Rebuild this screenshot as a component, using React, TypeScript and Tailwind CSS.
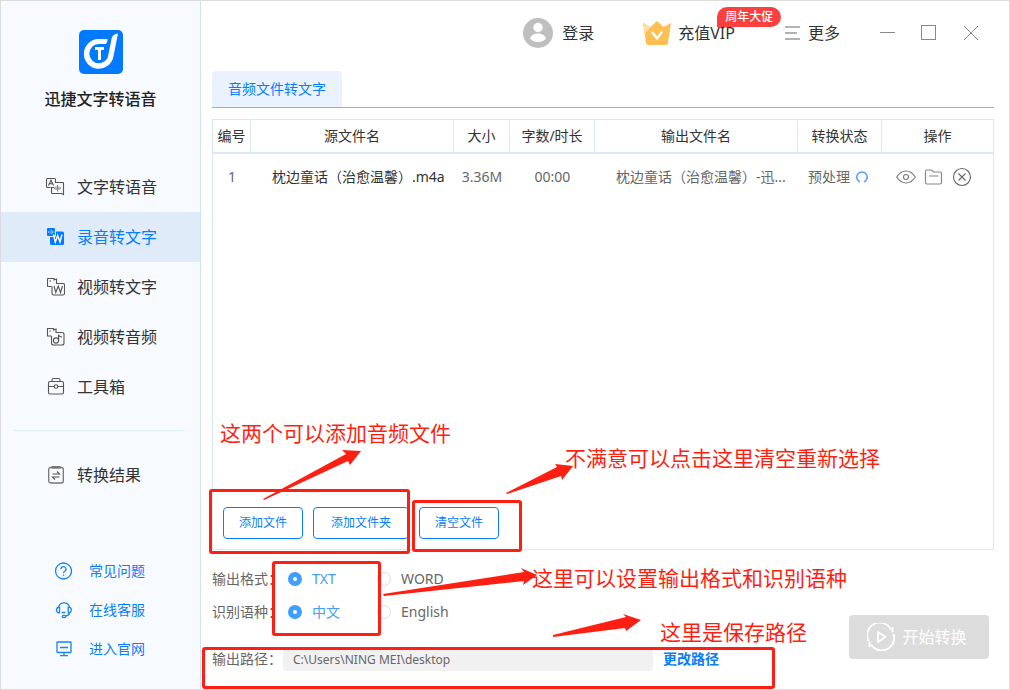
import React, { useState } from 'react';

const helpLinks = [
    { label: '常见问题', icon: <HelpIcon /> },
    { label: '在线客服', icon: <HeadsetIcon /> },
    { label: '进入官网', icon: <MonitorIcon /> },
];

const navItems = [
    { label: '文字转语音', icon: <TextToVoiceIcon /> },
    { label: '录音转文字', icon: <VoiceToTextIcon /> },
    { label: '视频转文字', icon: <VideoToTextIcon /> },
    { label: '视频转音频', icon: <VideoToAudioIcon /> },
    { label: '工具箱', icon: <ToolboxIcon /> },
];

const columns = [
    { title: '编号', width: 'w-[38px]' },
    { title: '源文件名', width: 'w-auto' },
    { title: '大小', width: 'w-14' },
    { title: '字数/时长', width: 'w-[85px]' },
    { title: '输出文件名', width: 'w-auto' },
    { title: '转换状态', width: 'w-[84px]' },
    { title: '操作', width: 'w-[111px]' },
];

const files = [
    { id: 1, source: '枕边童话（治愈温馨）.m4a', size: '3.36M', length: '00:00', output: '枕边童话（治愈温馨）-迅...', status: '预处理' },
];

const notes = [
    { text: '这两个可以添加音频文件', place: 'left-[220px] top-[419px]' },
    { text: '不满意可以点击这里清空重新选择', place: 'left-[565px] top-[444px]' },
    { text: '这里可以设置输出格式和识别语种', place: 'left-[532px] top-[564px]' },
    { text: '这里是保存路径', place: 'left-[660px] top-[618px]' },
];

const frames = [
    'left-[209px] top-[489px] w-[201px] h-[65px]',
    'left-[412px] top-[500px] w-[110px] h-[52px]',
    'left-[272px] top-[561px] w-[109px] h-[75px]',
    'left-[202px] top-[647px] w-[573px] h-[42px]',
];

const arrows = [
    '263,499 346,454 342,450 361,451 350,465 348,461 264,500',
    '506,493 557,467 555,464 573,466 562,480 561,476 507,494',
    '383,594 524,572 521,568 537,575 523,585 524,581 384,596',
    '553,635 626,617 623,614 641,620 626,631 625,628 553,637',
];

function Logo() {
    return (
        <svg width="44" height="44" viewBox="0 0 44 44">
            <rect width="44" height="44" rx="5" fill="#027aff" />
            <path d="M28.500 9H19.500A14.900 14.900 0 1 0 34.500 26L39 3.500C34.500 4 33 6 32.400 9.500L29.500 24A9.600 9.600 0 1 1 19.500 14H26.500Q28.500 13 28.500 9Z" fill="#fff" />
            <path d="M16 18.500H25M20.500 18.500V30" stroke="#fff" strokeWidth="3" fill="none" />
        </svg>
    );
}

function TextToVoiceIcon() {
    return (
        <svg width="20" height="20" viewBox="0 0 20 20" fill="none" stroke="#555" strokeWidth="1.100">
            <path d="M5.500 10.500H2.500Q1.500 10.500 1.500 9.500V2.500Q1.500 1.500 2.500 1.500H9.500Q10.500 1.500 10.500 2.500V5.500H18Q18.500 5.500 18.500 6V17.500L16.500 16.500H7.500Q6.500 16.500 6.500 15.500V10.500H9" />
            <path d="M3.500 8.500L6 3.300L8.500 8.500M4.500 6.800H7.500" />
            <path d="M9.500 10.500V12M11 9.500V13M12.500 8V14.500M14 9.500V13M15.500 10.500V12" stroke="#888" />
        </svg>
    );
}

function VoiceToTextIcon() {
    return (
        <svg width="20" height="20" viewBox="0 0 20 20" fill="none">
            <rect x="2" y="1" width="8" height="8" rx="1" fill="#027aff" />
            <path d="M11 4.500H17.500Q19 4.500 19 6V16.500Q19 18 17.500 18H6.500Q5 18 5 16.500V10H9.500Q11 10 11 8.500Z" fill="#027aff" />
            <path d="M3.500 4V6M5 3.500V6.500M6.300 2.500V7.500M7.500 3.500V6.500M9 4V6" stroke="#8fc4ff" strokeWidth="0.800" />
            <path d="M8.500 7.500L10.300 15L12.700 8.500L15 15L17 7.500" stroke="#fff" strokeWidth="1.400" />
        </svg>
    );
}

function VideoToTextIcon() {
    return (
        <svg width="20" height="20" viewBox="0 0 20 20" fill="none" stroke="#555" strokeWidth="1.100">
            <path d="M6.500 9.500H3Q2.500 9.500 2.500 9V2Q2.500 1.500 3 1.500H9V3L11.500 2V6.500H18Q19.500 6.500 19.500 8V16.500Q19.500 18 18 18H8.500Q7 18 7 16.500V9.500" />
            <path d="M4.500 4H6" />
            <path d="M9 9L10.800 15.500L13.200 9L15.500 15.500L17.500 9" />
        </svg>
    );
}

function VideoToAudioIcon() {
    return (
        <svg width="20" height="20" viewBox="0 0 20 20" fill="none" stroke="#555" strokeWidth="1.100">
            <path d="M6.500 9H2.500V1.500H8.500V3L11 2V5.500H17Q19 5.500 19 7V16Q19 18 17 18H8.500Q6.500 18 6.500 16V9" />
            <path d="M4.500 4H6" />
            <circle cx="11" cy="13.500" r="2.600" />
            <path d="M13.600 13.500V7.500Q14 10 17 10" />
        </svg>
    );
}

function ToolboxIcon() {
    return (
        <svg width="20" height="20" viewBox="0 0 20 20" fill="none" stroke="#555" strokeWidth="1.100">
            <rect x="3.500" y="4.500" width="15" height="12.500" rx="1.500" />
            <path d="M7 4.500V3Q7 1.500 8.500 1.500H13.500Q15 1.500 15 3V4.500M3.500 9.500H9M13 9.500H18.500" />
            <circle cx="11" cy="9.500" r="1.800" />
        </svg>
    );
}

function ResultIcon() {
    return (
        <svg width="20" height="20" viewBox="0 0 20 20" fill="none" stroke="#777" strokeWidth="1.300">
            <rect x="3.700" y="2.500" width="14.600" height="15.500" rx="2" />
            <path d="M6.500 2.300H15.500" strokeWidth="2.600" />
            <path d="M7.500 9H14.500L12 6.500M14.500 12H7.500L10 14.500" stroke="#555" strokeWidth="1.100" />
        </svg>
    );
}

function HelpIcon() {
    return (
        <svg width="18" height="18" viewBox="0 0 18 18" fill="none" stroke="#1a83f7" strokeWidth="1.300">
            <circle cx="9.500" cy="9" r="8" />
            <path d="M7 7.200A2.500 2.500 0 1 1 10.800 9.200Q9.500 9.900 9.500 11.200M9.500 12.500V13.800" />
        </svg>
    );
}

function HeadsetIcon() {
    return (
        <svg width="18" height="18" viewBox="0 0 18 18" fill="none" stroke="#1a83f7" strokeWidth="1.300">
            <path d="M4.500 6.500C5 3.500 7.500 1.800 10 1.800S15 3.500 15.500 6.500" />
            <path d="M5.500 6.200V11.800C3.500 12 2.500 10.500 2.500 9S3.500 6.200 5.500 6.200ZM14.200 6.200V11.800C16.300 12 17.300 10.500 17.300 9S16.300 6.200 14.200 6.200Z" />
            <path d="M15.700 11.800Q15 14.500 11.500 15M7.700 11.500H11.200" />
            <ellipse cx="10" cy="15.500" rx="1.800" ry="1.200" />
        </svg>
    );
}

function MonitorIcon() {
    return (
        <svg width="18" height="18" viewBox="0 0 18 18" fill="none" stroke="#1a83f7" strokeWidth="1.300">
            <rect x="3" y="2" width="14" height="10.500" rx="0.500" />
            <path d="M6 7.500H14M10 12.500V15.500M6 15.700H14" />
        </svg>
    );
}

function Avatar() {
    return (
        <svg width="30" height="30" viewBox="0 0 30 30">
            <circle cx="15" cy="15" r="15" fill="#bfbfbf" />
            <circle cx="15" cy="9.500" r="4.700" fill="#fff" />
            <path d="M7 20.500Q9 15.500 15 15.500T23 20.500Q20 24 15 24T7 20.500Z" fill="#fff" />
        </svg>
    );
}

function Crown() {
    return (
        <svg width="28" height="26" viewBox="0 0 28 26" fill="none">
            <path d="M0 3L7.500 7L14 1L20.500 7L28 3L25 23Q24.700 25 22.500 25H5.500Q3.300 25 3 23Z" fill="#ffbf52" />
            <path d="M0 3L7.500 7L2 14Z" fill="#ffe0a8" />
            <path d="M9.500 12.500L14 18.500L18.500 12.500" stroke="#fff" strokeWidth="2.400" strokeLinecap="round" strokeLinejoin="round" />
        </svg>
    );
}

function Sidebar() {
    return (
        <aside className="w-[200px] shrink-0 flex flex-col bg-[#f7faff] border-r border-[#cde2f5] pb-[21px]">
            <div className="flex flex-col items-center pt-[29px]">
                <Logo />
                <h1 className="mt-[13px] text-base leading-6 font-medium text-[#222]">迅捷文字转语音</h1>
            </div>
            <nav className="mt-[51px]">
                {navItems.map(function (item, i) {
                    return (
                        <a
                            key={item.label}
                            href="#"
                            className={'flex items-center h-[50px] pl-11 gap-3 text-base ' + (i === 1 ? 'bg-[#dfebf8] text-[#0a7dfa]' : 'text-[#333]')}
                        >
                            {item.icon}
                            {item.label}
                        </a>
                    );
                })}
                <hr className="mt-[18px] ml-3 mr-4 border-[#deedfa]" />
                <a href="#" className="mt-[19px] flex items-center h-[50px] pl-11 gap-3 text-base text-[#333]">
                    <ResultIcon />
                    转换结果
                </a>
            </nav>
            <div className="mt-auto">
                {helpLinks.map(function (link) {
                    return (
                        <a key={link.label} href="#" className="flex items-center h-[39px] pl-[53px] gap-[17px] text-sm text-[#0a7dfa]">
                            {link.icon}
                            {link.label}
                        </a>
                    );
                })}
            </div>
        </aside>
    );
}

function TopBar() {
    return (
        <header className="flex items-center justify-end h-16 pr-[30px] text-base text-[#333]">
            <button className="flex items-center gap-[9px]">
                <Avatar />
                登录
            </button>
            <button className="relative ml-[49px] flex items-center gap-[7px]">
                <Crown />
                充值VIP
                <span className="absolute -top-[13px] left-[74px] w-16 h-5 rounded-[10px] rounded-bl-none bg-[#fe3f3f] text-white text-xs leading-5 font-medium">周年大促</span>
            </button>
            <button className="ml-[50px] flex items-center gap-2">
                <svg width="15" height="14" viewBox="0 0 15 14" stroke="#999" strokeWidth="1.500">
                    <path d="M0 1H15M0 7H12M0 13H15" />
                </svg>
                更多
            </button>
            <div className="ml-[39px] flex items-center gap-[26px]">
                <button aria-label="最小化">
                    <svg width="16" height="16" viewBox="0 0 16 16" stroke="#888"><path d="M1 7.500H16" /></svg>
                </button>
                <button aria-label="最大化">
                    <svg width="16" height="16" viewBox="0 0 16 16" stroke="#888" fill="none"><rect x="0.500" y="0.500" width="14" height="14" /></svg>
                </button>
                <button aria-label="关闭">
                    <svg width="16" height="16" viewBox="0 0 16 16" stroke="#888"><path d="M1 1L15 15M15 1L1 15" /></svg>
                </button>
            </div>
        </header>
    );
}

function RowActions() {
    return (
        <div className="flex items-center gap-2">
            <button aria-label="查看">
                <svg width="20" height="20" viewBox="0 0 20 20" fill="none" stroke="#777" strokeWidth="1.100">
                    <path d="M0.700 10Q4.500 4 10 4T19.300 10Q15.500 16 10 16T0.700 10Z" />
                    <circle cx="10" cy="10" r="2.500" />
                </svg>
            </button>
            <button aria-label="打开文件夹">
                <svg width="20" height="20" viewBox="0 0 20 20" fill="none" stroke="#888" strokeWidth="1.200">
                    <path d="M1.500 15.500V4.500Q1.500 3 3 3H7.500L9.500 5H16Q17.500 5 17.500 6.500V15.500Q17.500 17 16 17H3Q1.500 17 1.500 15.500ZM5 9H14.500" />
                </svg>
            </button>
            <button aria-label="删除">
                <svg width="20" height="20" viewBox="0 0 20 20" fill="none" stroke="#666" strokeWidth="1.100">
                    <circle cx="10" cy="10" r="8.500" />
                    <path d="M6.500 6.500L13.500 13.500M13.500 6.500L6.500 13.500" />
                </svg>
            </button>
        </div>
    );
}

function FileTable() {
    return (
        <table className="w-full table-fixed border-separate border-spacing-0 text-sm">
            <thead>
                <tr className="h-[34px] text-[#333]">
                    {columns.map(function (col) {
                        return (
                            <th key={col.title} className={'p-0 font-normal border-b-2 border-r border-[#d9e8f7] last:border-r-0 ' + col.width}>
                                {col.title}
                            </th>
                        );
                    })}
                </tr>
            </thead>
            <tbody>
                {files.map(function (file) {
                    return (
                        <tr key={file.id} className="h-[45px] text-center text-[#666]">
                            <td className="p-0">{file.id}</td>
                            <td className="p-0 pl-[21px] text-left text-[#333] whitespace-nowrap">{file.source}</td>
                            <td className="p-0">{file.size}</td>
                            <td className="p-0">{file.length}</td>
                            <td className="p-0 pl-[21px] text-left whitespace-nowrap">{file.output}</td>
                            <td className="p-0 pl-2.5">
                                <div className="flex items-center gap-1.5">
                                    {file.status}
                                    <svg width="12" height="12" viewBox="0 0 12 12" fill="none" stroke="#5ba4fb" strokeWidth="1.600">
                                        <path d="M4 11A5.200 5.200 0 1 1 8 11" />
                                    </svg>
                                </div>
                            </td>
                            <td className="p-0 pl-3.5"><RowActions /></td>
                        </tr>
                    );
                })}
            </tbody>
        </table>
    );
}

function RadioRow({ title, name, options }: { title: string; name: string; options: string[] }) {
    const [value, setValue] = useState(options[0]);

    return (
        <fieldset className="flex items-center h-[33px]">
            <legend className="float-left w-[76px]">{title}：</legend>
            {options.map(function (option) {
                return (
                    <label key={option} className={'flex items-center gap-2.5 min-w-[89px] ' + (value === option ? 'text-[#409eff]' : '')}>
                        <input
                            type="radio"
                            name={name}
                            checked={value === option}
                            onChange={() => setValue(option)}
                            className="appearance-none size-3.5 rounded-full border border-[#dcdfe6] bg-white checked:border-[5px] checked:border-[#409eff]"
                        />
                        {option}
                    </label>
                );
            })}
        </fieldset>
    );
}

function Settings() {
    return (
        <div className="flex items-start justify-between pt-3 pr-[5px] pb-[18px] text-sm text-[#666]">
            <div>
                <RadioRow title="输出格式" name="format" options={['TXT', 'WORD']} />
                <RadioRow title="识别语种" name="language" options={['中文', 'English']} />
                <div className="mt-[19px] flex items-center h-6">
                    <label htmlFor="path" className="w-[71px]">输出路径：</label>
                    <input id="path" readOnly value="C:\Users\NING MEI\desktop" className="w-[370px] h-6 px-2.5 rounded-sm bg-[#f1f1f1] text-xs" />
                    <button className="ml-2.5 font-bold text-[#0a7dfa]">更改路径</button>
                </div>
            </div>
            <button className="mt-[53px] pr-1 flex items-center justify-center gap-[7px] w-[140px] h-11 rounded bg-[#dcdcdc] text-white text-base">
                <svg width="28" height="28" viewBox="0 0 28 28" fill="none" stroke="#fff" strokeWidth="1.800">
                    <path d="M1.500 18A12.500 12.500 0 0 1 24 6.500M25.500 4V9.500M26.500 11A12.500 12.500 0 0 1 4 21.500M2.500 24V18.500" />
                    <path d="M11 9L18.500 14L11 19Z" strokeLinejoin="round" />
                </svg>
                开始转换
            </button>
        </div>
    );
}

function Annotations() {
    return (
        <div className="absolute -inset-px pointer-events-none text-[#ff1f12]">
            {frames.map(function (frame) {
                return <div key={frame} className={'absolute border-[3px] border-[#ff1f12] rounded-[3px] ' + frame} />;
            })}
            <svg className="absolute inset-0 size-full" fill="#ff1f12">
                {arrows.map(function (points) {
                    return <polygon key={points} points={points} />;
                })}
            </svg>
            {notes.map(function (note) {
                return (
                    <p key={note.text} className={'absolute text-[21px] leading-7 whitespace-nowrap ' + note.place}>
                        {note.text}
                    </p>
                );
            })}
        </div>
    );
}

export default function App() {
    return (
        <div className="relative flex min-h-screen border border-[#dcdcdc] bg-white font-['Noto_Sans','Noto_Sans_CJK_SC',sans-serif]">
            <Sidebar />
            <main className="flex-1 min-w-0 flex flex-col">
                <TopBar />
                <div className="flex-1 flex flex-col pl-[11px] pr-[15px] pt-1.5">
                    <div className="border-b border-[#86b2e6]">
                        <button className="block w-[130px] h-9 rounded-t bg-[#eaf2fe] text-sm text-[#0a7dfa]">音频文件转文字</button>
                    </div>
                    <section className="mt-[11px] flex-1 flex flex-col border border-[#d9e8f7]">
                        <FileTable />
                        <div className="mt-auto flex gap-2.5 p-2.5">
                            <button className="w-20 h-8 rounded border border-[#0a7dfa] text-xs text-[#0a7dfa]">添加文件</button>
                            <button className="w-24 h-8 rounded border border-[#0a7dfa] text-xs text-[#0a7dfa]">添加文件夹</button>
                            <button className="w-20 h-8 rounded border border-[#0a7dfa] text-xs text-[#0a7dfa]">清空文件</button>
                        </div>
                    </section>
                    <Settings />
                </div>
            </main>
            <Annotations />
        </div>
    );
}
